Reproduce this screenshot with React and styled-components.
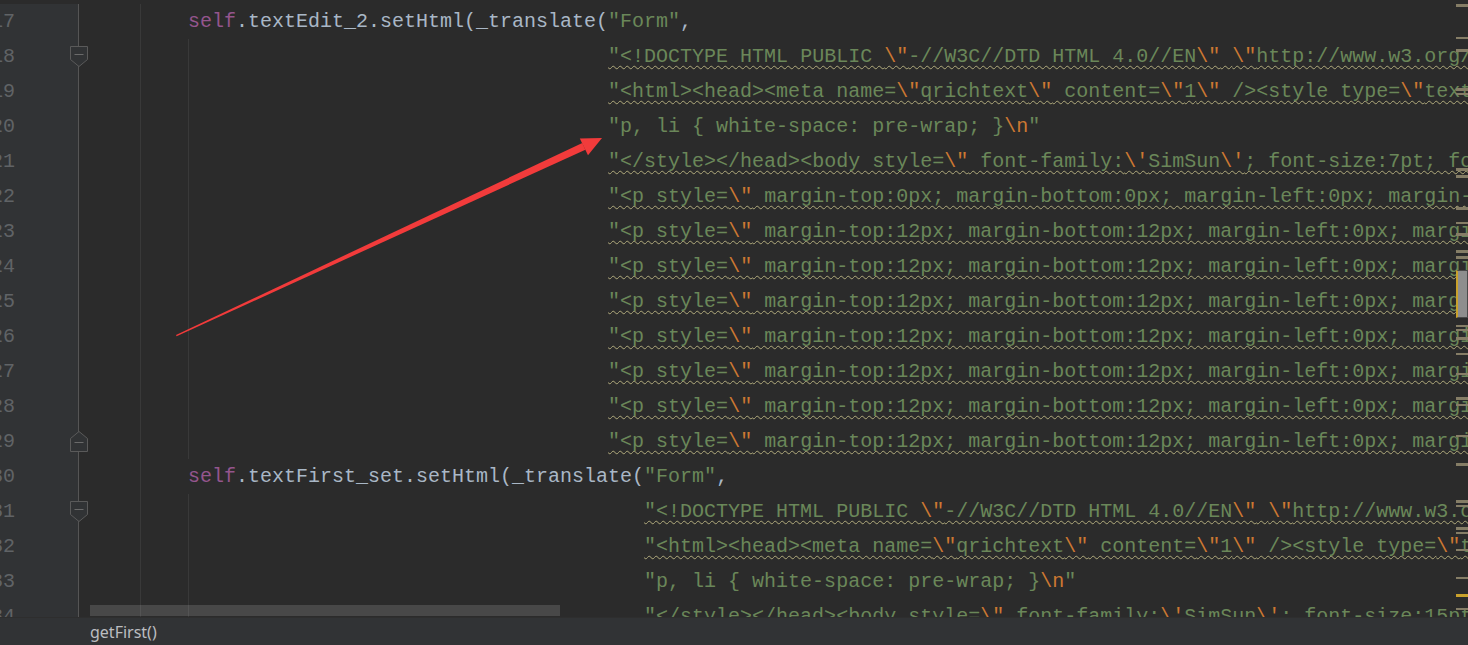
import React from "react";
import styled, { createGlobalStyle } from "styled-components";

const GlobalStyle = createGlobalStyle`
  html, body {
    margin: 0;
    padding: 0;
    background: #2b2b2b;
  }
  body {
    overflow: hidden;
  }
`;

const pRow = (top) =>
  String.raw`"<p style=\" margin-top:${top}px; margin-bottom:${top}px; margin-left:0px; margin-right:0px; -qt-block-indent:0; text-indent:0px;\"><span style=\" font-size:9pt;\">...</span></p>\n"`;

const doctype = String.raw`"<!DOCTYPE HTML PUBLIC \"-//W3C//DTD HTML 4.0//EN\" \"http://www.w3.org/TR/REC-html40/strict.dtd\">\n"`;
const htmlHead = String.raw`"<html><head><meta name=\"qrichtext\" content=\"1\" /><style type=\"text/css\">\n"`;
const preWrap = String.raw`"p, li { white-space: pre-wrap; }\n"`;
const bodyStyle = (size) =>
  String.raw`"</style></head><body style=\" font-family:\'SimSun\'; font-size:${size}pt; font-weight:400; font-style:normal;\">\n"`;

const lines = [
  { n: 17, call: "textEdit_2" },
  { n: 18, indent: 43, str: doctype, wavy: true, fold: "down", deep: true },
  { n: 19, indent: 43, str: htmlHead, wavy: true, deep: true },
  { n: 20, indent: 43, str: preWrap, deep: true },
  { n: 21, indent: 43, str: bodyStyle(7), wavy: true, deep: true },
  { n: 22, indent: 43, str: pRow(0), wavy: true, deep: true },
  { n: 23, indent: 43, str: pRow(12), wavy: true, deep: true },
  { n: 24, indent: 43, str: pRow(12), wavy: true, deep: true },
  { n: 25, indent: 43, str: pRow(12), wavy: true, deep: true },
  { n: 26, indent: 43, str: pRow(12), wavy: true, deep: true },
  { n: 27, indent: 43, str: pRow(12), wavy: true, deep: true },
  { n: 28, indent: 43, str: pRow(12), wavy: true, deep: true },
  { n: 29, indent: 43, str: pRow(12), wavy: true, fold: "up", deep: true },
  { n: 30, call: "textFirst_set" },
  { n: 31, indent: 46, str: doctype, wavy: true, fold: "down", deep: true },
  { n: 32, indent: 46, str: htmlHead, wavy: true, deep: true },
  { n: 33, indent: 46, str: preWrap, deep: true },
  { n: 34, indent: 46, str: bodyStyle(15), wavy: true, deep: true },
];

// error stripe ticks on the right edge: [top, height, yellow?]
const marks = [
  [4, 3], [37, 2], [49, 3], [88, 3], [93, 2], [168, 3], [175, 3], [207, 3],
  [222, 2], [233, 3], [250, 3], [256, 3], [272, 2, true], [290, 2, true],
  [307, 2, true], [316, 2, true], [325, 2], [329, 2], [337, 3], [353, 2],
  [373, 2], [397, 3], [404, 2], [435, 2], [463, 3], [500, 3], [505, 2],
  [527, 3], [532, 2], [549, 2], [577, 2], [594, 3, true], [608, 2],
];

const tokens = (text) =>
  text.split(/(\\["'n])/).map((part, i) =>
    i % 2 ? <Esc key={i}>{part}</Esc> : part
  );

const FoldMarker = ({ dir }) => (
  <FoldIcon width="20" height="23" viewBox="0 0 20 23">
    <polygon
      points={
        dir === "down"
          ? "1.5,1.5 18.5,1.5 18.5,14.5 10,21.5 1.5,14.5"
          : "1.5,21.5 18.5,21.5 18.5,8.5 10,1.5 1.5,8.5"
      }
      fill="#313335"
      stroke="#5a5a5a"
      strokeWidth="1"
    />
    <line
      x1="5.5"
      x2="14.5"
      y1={dir === "down" ? 9.5 : 12.5}
      y2={dir === "down" ? 9.5 : 12.5}
      stroke="#6a6a6a"
      strokeWidth="1"
    />
  </FoldIcon>
);

const App = () => {
  return (
    <Page>
      <GlobalStyle />
      <Editor>
        <Lines>
          {lines.map((l) => (
            <Row key={l.n}>
              <Gutter>
                <LineNo>
                  <span>{l.n}</span>
                </LineNo>
                {l.fold && <FoldMarker dir={l.fold} />}
              </Gutter>
              <Code $deep={l.deep}>
                {l.call ? (
                  <>
                    {"        "}
                    <Self>self</Self>
                    {`.${l.call}.setHtml(_translate(`}
                    <Str>"Form"</Str>,
                  </>
                ) : (
                  <>
                    {" ".repeat(l.indent)}
                    <Str $wavy={l.wavy}>{tokens(l.str)}</Str>
                  </>
                )}
              </Code>
            </Row>
          ))}
        </Lines>

        <HScrollThumb />

        <ErrorStripe>
          {marks.map(([top, h, yellow], i) => (
            <Mark key={i} $yellow={yellow} style={{ top, height: h }} />
          ))}
          <VThumb />
        </ErrorStripe>

        <Arrow viewBox="0 0 1468 617">
          <polygon
            points="176,335 176.6,336.2 585.4,149.8 582.3,143"
            fill="#f23b3b"
          />
          <polygon
            points="602,138 579.8,138.4 588,155.2"
            fill="#f23b3b"
          />
        </Arrow>
      </Editor>

      <StatusBar>getFirst()</StatusBar>
    </Page>
  );
};

export default App;

// Styled Components

const Page = styled.div`
  width: 1468px;
  height: 645px;
  display: flex;
  flex-direction: column;
  overflow: hidden;
  background: #2b2b2b;
  font-family: "Liberation Mono", "DejaVu Sans Mono", monospace;
  font-size: 20px;
  line-height: 35px;
`;

const Editor = styled.div`
  flex: 1;
  position: relative;
  overflow: hidden;
`;

const Lines = styled.div`
  padding-top: 4px;
`;

const Row = styled.div`
  display: flex;
  height: 35px;
`;

const Gutter = styled.div`
  width: 78px;
  flex-shrink: 0;
  display: flex;
  align-items: center;
  justify-content: space-between;
  background: #313335;
  border-right: 1px solid #555555;
`;

const LineNo = styled.div`
  width: 15px;
  overflow: hidden;
  display: flex;
  justify-content: flex-end;
  color: #606366;

  > span {
    flex-shrink: 0;
  }
`;

const FoldIcon = styled.svg`
  flex-shrink: 0;
  margin-right: -11px;
  position: relative;
  z-index: 1;
`;

const Code = styled.div`
  flex: 1;
  min-width: 0;
  padding-left: 13px;
  white-space: pre;
  overflow: hidden;
  color: #a9b7c6;
  background-image: linear-gradient(#393939, #393939)
    ${(p) => (p.$deep ? ", linear-gradient(#393939, #393939)" : "")};
  background-size: 1px 100%;
  background-repeat: no-repeat;
  background-position: 61px 0, 109px 0;
`;

const Self = styled.span`
  color: #94558d;
`;

const Str = styled.span`
  color: #6a8759;
  ${(p) =>
    p.$wavy &&
    `
    text-decoration-line: underline;
    text-decoration-style: wavy;
    text-decoration-color: #b0aa7c;
    text-decoration-thickness: 1px;
    text-underline-offset: 3px;
    text-decoration-skip-ink: none;
  `}
`;

const Esc = styled.span`
  color: #cc7832;
`;

const HScrollThumb = styled.div`
  position: absolute;
  left: 90px;
  bottom: 1px;
  width: 470px;
  height: 11px;
  background: rgba(255, 255, 255, 0.14);
`;

const ErrorStripe = styled.div`
  position: absolute;
  top: 0;
  right: 0;
  width: 12px;
  height: 100%;
`;

const Mark = styled.div`
  position: absolute;
  left: 0;
  right: 0;
  background: ${(p) => (p.$yellow ? "#c9a12c" : "#857d66")};
`;

const VThumb = styled.div`
  position: absolute;
  top: 270px;
  left: 0;
  width: 12px;
  height: 48px;
  box-sizing: border-box;
  border: 1px solid #4a4a4a;
  border-left: 2px solid #c9a12c;
  background: #8e8e8e;
`;

const Arrow = styled.svg`
  position: absolute;
  top: 0;
  left: 0;
  width: 1468px;
  height: 617px;
  pointer-events: none;
`;

const StatusBar = styled.div`
  height: 28px;
  flex-shrink: 0;
  box-sizing: border-box;
  display: flex;
  align-items: center;
  padding-left: 90px;
  background: #313335;
  border-top: 1px solid #2e2e2e;
  color: #bbbdc0;
  font-family: "Noto Sans", "Open Sans", sans-serif;
  font-size: 16px;
  line-height: 1;
`;
